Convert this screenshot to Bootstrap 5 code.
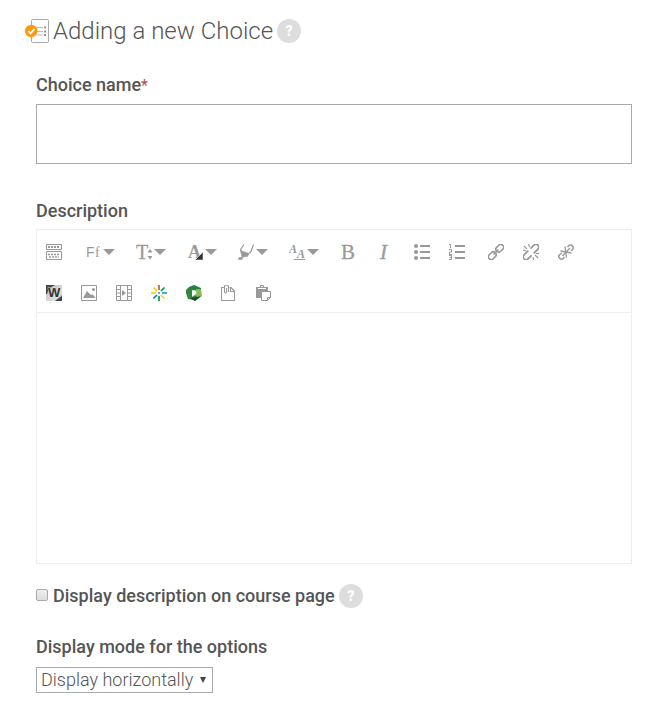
<!DOCTYPE html>
<html lang="en">
<head>
<meta charset="utf-8">
<meta name="viewport" content="width=device-width, initial-scale=1">
<title>Adding a new Choice</title>
<link href="https://cdn.jsdelivr.net/npm/bootstrap@5.3.0/dist/css/bootstrap.min.css" rel="stylesheet">
<style>
body { font-family: Roboto, "Liberation Sans", sans-serif; color: #555; background: #fff; }
.page { padding: 16px 19px 8px 36px; }
.page-title { margin-left: -11px; margin-bottom: 27px; gap: 4px; }
.page-title h1 { font-size: 24px; line-height: 30px; font-weight: 300; }
.field-label { font-size: 18px; line-height: 24px; font-weight: 500; }
.block-label { display: block; margin-bottom: 6px; }
.required-star { color: #b94a48; font-size: 16px; font-weight: 400; }
.help-btn { width: 24px; height: 24px; border: 0; border-radius: 50%; background: #ddd; color: #fff; font-size: 14px; line-height: 24px; font-weight: 900; padding: 0; }
.name-input { height: 60px; border: 1px solid #aaa; border-radius: 0; box-shadow: none; }
.name-field { margin-bottom: 35px; }
.editor { border: 1px solid #eee; }
.toolbar { padding-top: 3px; border-bottom: 1px solid #eee; }
.tool-group { margin-right: 4px; }
.tool-btn { width: 35px; height: 38px; border: 0; background: none; color: #999; padding: 0 1px 0 0; display: flex; align-items: center; justify-content: center; gap: 2px; }
.tool-btn svg { display: block; flex: none; }
.tool-menu { width: 51px; padding-right: 3px; }
.line-break { width: 100%; height: 3px; }
.editing-area { display: block; width: 100%; height: 250px; border: 0; resize: none; outline: 0; }
.show-desc { margin-top: 20px; gap: 4px; }
.show-desc input { appearance: none; width: 12px; height: 12px; border: 1px solid #aaa; border-radius: 2px; background: linear-gradient(#eee, #ddd); margin: 0 1px 2px 0; }
.show-desc input:checked { background: #777; }
.mode-field { margin-top: 27px; }
.mode-select { appearance: none; height: 26px; width: 177px; max-width: 100%; margin-top: 8px; border: 1px solid #aaa; border-radius: 0; padding: 0 18px 0 4px; color: #555; font-size: 18px; line-height: 24px; font-weight: 300; background: #fff url("data:image/svg+xml,%3Csvg xmlns='http://www.w3.org/2000/svg' viewBox='0 0 6 6'%3E%3Cpath d='M0 0h6L3 6z' fill='%23444'/%3E%3C/svg%3E") no-repeat right 6px center / 6px 6px; }
</style>
</head>
<body>
<svg class="d-none" aria-hidden="true">
  <symbol id="caret" viewBox="0 0 12 6"><path d="M0 0h12L6 6z" fill="currentColor"/></symbol>
</svg>
<main class="page">
  <header class="page-title d-flex align-items-center">
    <svg width="24" height="24" viewBox="0 0 24 24" aria-hidden="true">
      <rect x="6.5" y=".5" width="17" height="23" rx="1" fill="#fff" stroke="#aaa"/>
      <path d="M11 8.5h7M11 12.500h7M11 16h7" stroke="#bbb"/><path d="M19 8.500h2M19 12.500h2M19 16h2" stroke="#999" stroke-width="2"/>
      <circle cx="6.200" cy="12" r="6.200" fill="#ff980f"/><path d="M3.300 12l2.200 2.400 4-4.600" stroke="#fff" stroke-width="1.800" fill="none"/>
    </svg>
    <h1 class="mb-0">Adding a new Choice</h1>
    <button type="button" class="help-btn" aria-label="Help with Choice">?</button>
  </header>

  <form>
    <div class="name-field">
      <label class="field-label block-label" for="choice-name">Choice name<span class="required-star">*</span></label>
      <input class="form-control name-input" id="choice-name" type="text" required>
    </div>

    <label class="field-label block-label" for="description">Description</label>
    <div class="editor">
      <div class="toolbar d-flex flex-wrap" role="toolbar" aria-label="Editor">
        <div class="tool-group d-flex">
          <button type="button" class="tool-btn" aria-label="Toggle toolbar">
            <svg width="16" height="16" viewBox="0 0 16 16" fill="none" stroke="currentColor"><path d="M.5.500h15v5H.500zM.500 7.500h15v8H.500z"/><path d="M2 3h12" stroke-width="2" stroke-dasharray="2 1"/><path d="M2 10.500h12M3 13h10" stroke-width="1.500" stroke-dasharray="2 1"/></svg>
          </button>
        </div>
        <div class="d-flex flex-wrap">
          <button type="button" class="tool-btn tool-menu" aria-label="Font family">
            <svg width="16" height="24" viewBox="0 -4 16 24" fill="currentColor"><text x="1" y="13" font-family="Liberation Sans, sans-serif" font-size="14">F</text><text x="10" y="13" font-family="Liberation Serif, serif" font-size="14">f</text></svg>
            <svg width="12" height="6"><use href="#caret"/></svg>
          </button>
          <button type="button" class="tool-btn tool-menu" aria-label="Font size">
            <svg width="16" height="24" viewBox="0 -4 16 24" fill="currentColor"><text x="0" y="15" font-family="Liberation Serif, serif" font-size="20" stroke="currentColor" stroke-width=".3">T</text><path d="M11.500 8.500L14 5l2.500 3.500zM11.500 12L14 15.500l2.500-3.500z"/></svg>
            <svg width="12" height="6"><use href="#caret"/></svg>
          </button>
          <button type="button" class="tool-btn tool-menu" aria-label="Font color">
            <svg width="16" height="24" viewBox="0 -4 16 24"><text x="1" y="14" font-family="Liberation Serif, serif" font-weight="700" font-size="18" fill="currentColor">A</text><path d="M16 8v8H8z" fill="#333" stroke="#fff" stroke-width=".5"/></svg>
            <svg width="12" height="6"><use href="#caret"/></svg>
          </button>
          <button type="button" class="tool-btn tool-menu" aria-label="Background color">
            <svg width="16" height="16" viewBox="0 0 16 16" fill="none" stroke="currentColor"><path d="M6 .500L2.500 5.500l1 2.500M15.500.500L13 7.500l-2 2" stroke-width="1.200"/><path d="M2.500 6.500L11 9.500l-1.500 3-5.500.500zM1 13.500h4L4 15.500H.500z" fill="currentColor" stroke-width=".6"/></svg>
            <svg width="12" height="6"><use href="#caret"/></svg>
          </button>
          <button type="button" class="tool-btn tool-menu" aria-label="Text style">
            <svg width="16" height="24" viewBox="0 -4 16 24" fill="currentColor"><g font-family="Liberation Serif, serif" font-style="italic" font-weight="700" font-size="12"><text x="0" y="9">A</text><text x="8" y="14">A</text></g><path d="M5 15h11v1H5z"/></svg>
            <svg width="12" height="6"><use href="#caret"/></svg>
          </button>
        </div>
        <div class="tool-group d-flex">
          <button type="button" class="tool-btn" aria-label="Bold"><svg width="16" height="26" viewBox="0 -5 16 26"><text x="1" y="15" font-family="Liberation Serif, serif" font-size="21" fill="currentColor" stroke="currentColor" stroke-width=".3">B</text></svg></button>
          <button type="button" class="tool-btn" aria-label="Italic"><svg width="16" height="26" viewBox="0 -5 16 26"><text x="5" y="15" font-family="Liberation Serif, serif" font-style="italic" font-size="21" fill="currentColor" stroke="currentColor" stroke-width=".3">I</text></svg></button>
        </div>
        <div class="tool-group d-flex">
          <button type="button" class="tool-btn" aria-label="Bulleted list"><svg width="16" height="16" viewBox="0 0 16 16" fill="currentColor"><circle cx="2" cy="2" r="2"/><circle cx="2" cy="8" r="2"/><circle cx="2" cy="14" r="2"/><path d="M6 1h10v2H6zM6 7h10v2H6zM6 13h10v2H6z"/></svg></button>
          <button type="button" class="tool-btn" aria-label="Numbered list"><svg width="16" height="16" viewBox="0 0 16 16" fill="none" stroke="currentColor"><path d="M6 2h10M6 8h10M6 14h10" stroke-width="2"/><path d="M0 .500h1.500V4M0 5.500h2.500V8H.500v2.500H3M0 11.500h2.500v4H0M.500 13.500h2"/></svg></button>
        </div>
        <div class="tool-group d-flex">
          <button type="button" class="tool-btn" aria-label="Link"><svg width="16" height="16" viewBox="0 0 16 16" fill="none" stroke="currentColor" stroke-width="1.600"><g transform="rotate(-45 8 8)"><rect x="-1.500" y="5.200" width="8.500" height="5.600" rx="2.800"/><rect x="9" y="5.200" width="8.500" height="5.600" rx="2.800"/><path d="M4.500 8h7"/></g></svg></button>
          <button type="button" class="tool-btn" aria-label="Unlink"><svg width="16" height="16" viewBox="0 0 16 16" fill="none" stroke="currentColor" stroke-width="1.800"><g transform="rotate(-45 8 8)"><path d="M7 5.200H1a2.800 2.800 0 0 0 0 5.600h5M10 5.200h5a2.800 2.800 0 0 1 0 5.600H9"/></g><path d="M5.500 0l1 3M1 2l3 3M0 6l3 .700M10 13l.500 3M12 11l3 3M13 9.500h3" stroke-width="1.100"/></svg></button>
          <button type="button" class="tool-btn" aria-label="Prevent automatic link"><svg width="16" height="16" viewBox="0 0 16 16" fill="none" stroke="currentColor" stroke-width="1.500"><path d="M9.500 3l1.200-1.300a2.700 2.700 0 0 1 3.800 3.800L13 7M4 9L1.500 10.700a2.700 2.700 0 0 0 3.800 3.800L6.500 13"/><path d="M2.500 7l11 2M7 2.500l1.500 11M12 4l-7.500 8" stroke-width="1.300"/></svg></button>
        </div>
        <div class="line-break d-none d-sm-block"></div>
        <div class="d-flex flex-wrap">
          <button type="button" class="tool-btn" aria-label="Word import"><svg width="16" height="20" viewBox="0 -2 16 20"><defs><linearGradient id="word-bg" x2="1" y2="1"><stop stop-color="#333"/><stop offset=".3" stop-color="#ccc"/><stop offset=".75" stop-color="#ddd"/><stop offset="1" stop-color="#333"/></linearGradient></defs><path d="M0 0h16v16H0z" fill="url(#word-bg)"/><path d="M0 0h9L3 3 1 9H0zM16 11v5h-7z" fill="#444"/><text x="2" y="12" font-family="Liberation Sans, sans-serif" font-weight="700" font-size="13" fill="#333" stroke="#ddd" stroke-width=".8" paint-order="stroke">W</text></svg></button>
          <button type="button" class="tool-btn" aria-label="Image"><svg width="16" height="16" viewBox="0 0 16 16" fill="currentColor"><path d="M.500.500h15v15H.500z" fill="none" stroke="currentColor"/><path d="M2 13l4-7 4 4 1-1 3 3v1z"/><circle cx="12.500" cy="4.500" r="1.500"/></svg></button>
          <button type="button" class="tool-btn" aria-label="Media"><svg width="16" height="16" viewBox="0 0 16 16" fill="none" stroke="currentColor"><path d="M.500.500h15v15H.500zM4.500 0v16M11.500 0v16M0 4.500h5M11 4.500h5M0 8h5M11 8h5M0 11.500h5M11 11.500h5"/><path d="M6 5l4 3-4 3z" fill="currentColor" stroke="none"/></svg></button>
          <button type="button" class="tool-btn" aria-label="Kaltura media"><svg width="16" height="16" viewBox="0 0 16 16" stroke-width="1.700"><path d="M8 0v5" stroke="#e54b35"/><path d="M10 6l3.500-3.500" stroke="#079b50"/><path d="M11 8h5" stroke="#17a5d5"/><path d="M10 10l3.500 3.500" stroke="#f5d321"/><path d="M8 11v5" stroke="#079b50"/><path d="M6 10l-3.500 3.500" stroke="#1a7fb0"/><path d="M0 8h5" stroke="#f5cf18"/><path d="M6 6L2.500 2.500" stroke="#f5cf18"/><path d="M7.300 8h1.400" stroke="#345" stroke-width="1.400"/></svg></button>
          <button type="button" class="tool-btn" aria-label="Panopto video"><svg width="16" height="16" viewBox="0 0 16 16"><path d="M3 2l5-2 7 3v5L8 5 0 9V5z" fill="#26813f"/><path d="M15 4l1 7-7 5-4-2 5-6V4z" fill="#84bd55"/><path d="M0 5l6-1v6l5 1-2 4-7-1-2-6z" fill="#34863e"/><path d="M4 13l7-1 4-1-6 5z" fill="#134e31"/><path d="M6 5l5 3-5 4z" fill="#fff"/></svg></button>
          <button type="button" class="tool-btn" aria-label="Manage files"><svg width="16" height="16" viewBox="0 0 16 16" fill="none" stroke="currentColor"><path d="M3 2.500H.500v13h13V6L10 2.500H8.500M9.500 2.500v4h4M3.500 3v4a1 1 0 0 0 2 0V3M3.500 3V2a2 2 0 0 1 4 0v5" stroke-width="1.100"/></svg></button>
          <button type="button" class="tool-btn" aria-label="Paste"><svg width="16" height="16" viewBox="0 0 16 16" fill="none" stroke="currentColor"><path d="M0 2h12v4H6v7H0z" fill="currentColor" stroke="none"/><path d="M4.500 2.500v-2h3v2"/><path d="M2 3.500h8" stroke="#fff"/><path d="M5.500 6.500h9v6l-3 3h-6zM14.500 12.500h-3v3" fill="#fff"/></svg></button>
        </div>
      </div>
      <textarea class="editing-area" id="description"></textarea>
    </div>

    <div class="show-desc d-flex align-items-center">
      <input type="checkbox" id="show-desc">
      <label class="field-label" for="show-desc">Display description on course page</label>
      <button type="button" class="help-btn" aria-label="Help with display description">?</button>
    </div>

    <div class="mode-field">
      <label class="field-label d-block" for="mode">Display mode for the options</label>
      <select class="mode-select" id="mode">
        <option>Display horizontally</option>
        <option>Display vertically</option>
      </select>
    </div>
  </form>
</main>
<script src="https://cdn.jsdelivr.net/npm/bootstrap@5.3.0/dist/js/bootstrap.bundle.min.js"></script>
</body>
</html>
